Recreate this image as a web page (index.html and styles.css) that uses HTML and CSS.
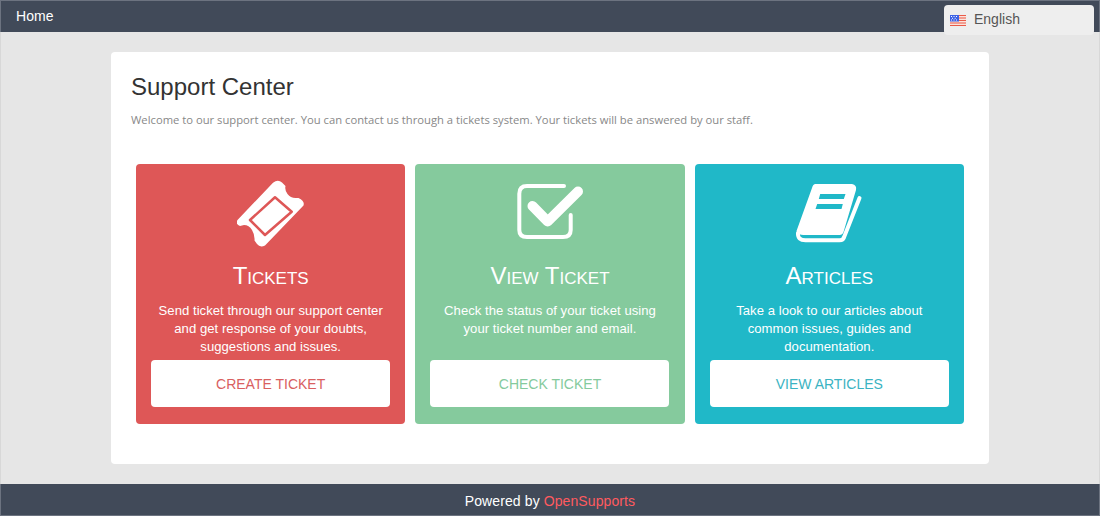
FILE: index.html
```html
<!DOCTYPE html>
<html lang="en">
<head>
    <meta charset="UTF-8">
    <title>Support Center</title>
    <link rel="stylesheet" href="styles.css">
</head>
<body>
    <header class="top-bar">
        <a class="home-link" href="#">Home</a>
        <div class="language-select">
            <svg class="flag" viewBox="0 0 16 11" width="16" height="11">
                <rect width="16" height="11" fill="#fbe3dc"/>
                <path d="M0 .5h16M0 3h16M0 5.500h16M0 8h16M0 10.500h16" stroke="#ea5a48" stroke-width="1.200"/>
                <rect width="9" height="6.500" fill="#3c62e6"/>
                <path d="M1 1.500h1M3.500 1.500h1M6 1.500h1M2 3.300h1M4.700 3.300h1M1 5h1M3.500 5h1M6 5h1" stroke="#fff" stroke-width="1"/>
            </svg>
            <span>English</span>
        </div>
    </header>

    <main class="page">
        <section class="card">
            <h1>Support Center</h1>
            <p class="intro">Welcome to our support center. You can contact us through a tickets system. Your tickets will be answered by our staff.</p>

            <div class="tiles">
                <div class="tile tile-red">
                    <svg class="tile-icon" viewBox="17 10 68 68" width="68" height="68">
                        <path fill="#fff" d="M17.500 50 53 12.700Q58 9 62 12.500L65.500 16Q64.500 20 67.500 24T75.500 28L78.500 28Q85 31 83.500 35.500L45 75.500Q40 78 37 74L34.500 70.500Q35 65 32 60T24 55L20 56Q15 54 17.500 50Z"/>
                        <path fill="#fff" stroke="#de5757" stroke-width="2.500" stroke-linejoin="round" d="M55 27.300 71.700 41.700 45 65 30 50Z"/>
                    </svg>
                    <h2>Tickets</h2>
                    <p>Send ticket through our support center and get response of your doubts, suggestions and issues.</p>
                    <a class="tile-button" href="#">CREATE TICKET</a>
                </div>
                <div class="tile tile-green">
                    <svg class="tile-icon" viewBox="16 10 68 68" width="68" height="68">
                        <path fill="none" stroke="#fff" stroke-width="4" stroke-linecap="round" d="M64 16H27Q19.300 16 19.300 23.700V60Q19.300 67 27 67H63Q70.700 67 70.700 60V45"/>
                        <path fill="none" stroke="#fff" stroke-width="10" stroke-linecap="round" stroke-linejoin="round" d="M32.500 36 47.700 51.500 78 21.500"/>
                    </svg>
                    <h2>View Ticket</h2>
                    <p>Check the status of your ticket using your ticket number and email.</p>
                    <a class="tile-button" href="#">CHECK TICKET</a>
                </div>
                <div class="tile tile-teal">
                    <svg class="tile-icon" viewBox="15.500 10 68 68" width="68" height="68">
                        <path fill="#fff" fill-rule="evenodd" d="M36 14H72.500Q77.500 15 76.500 20L64 62Q63 65 60 65H24Q19 65 17 61L32.500 18Q33.500 14 36 14ZM40.700 24 39.300 29H64.300L66 24ZM37.700 34 36 39H62L63.300 34Z"/>
                        <path fill="none" stroke="#fff" stroke-width="4" stroke-linecap="round" d="M18.500 63Q18 70.300 26 70.300H60Q64 70.300 65 66L80 28"/>
                    </svg>
                    <h2>Articles</h2>
                    <p>Take a look to our articles about common issues, guides and documentation.</p>
                    <a class="tile-button" href="#">VIEW ARTICLES</a>
                </div>
            </div>
        </section>
    </main>

    <footer class="bottom-bar">
        Powered by <a href="#">OpenSupports</a>
    </footer>
</body>
</html>
```

FILE: styles.css
```css
* {
    box-sizing: border-box;
    margin: 0;
    padding: 0;
}

body {
    font-family: "Liberation Sans", Arial, sans-serif;
    background-color: #e6e6e6;
    display: flex;
    flex-direction: column;
    height: 100vh;
    overflow: hidden;
}

a {
    text-decoration: none;
}

/* top bar */
.top-bar {
    position: relative;
    height: 32px;
    flex-shrink: 0;
    background-color: #414a59;
    border: 1px solid #6c7380;
    border-bottom: none;
    padding: 6px 15px;
}

.home-link {
    color: #fff;
    font-size: 14px;
    line-height: 16px;
    letter-spacing: 0.1px;
}

.language-select {
    position: absolute;
    top: 4px;
    right: 5px;
    width: 150px;
    height: 30px;
    background-color: #eee;
    border-radius: 4px;
    color: #555;
    font-size: 14px;
    display: flex;
    align-items: center;
    padding: 0 0 2px 6px;
    gap: 8px;
}

.flag {
    margin-top: 2px;
}

/* main card */
.page {
    flex: 1;
    display: flex;
    justify-content: center;
    padding-top: 20px;
    border-left: 1px solid #d8d8d8;
    border-right: 1px solid #d8d8d8;
}

.card {
    width: 878px;
    height: 412px;
    background-color: #fff;
    border-radius: 4px;
    padding: 20px 25px;
}

.card h1 {
    font-size: 24px;
    font-weight: normal;
    line-height: 30px;
    color: #333;
    margin-left: -5px;
}

.intro {
    font-family: "Open Sans", sans-serif;
    font-size: 11.240px;
    line-height: 16px;
    color: #888;
    margin: 10px 0 36px -5px;
}

.tiles {
    display: flex;
    gap: 10px;
}

.tile {
    flex: 1;
    height: 260px;
    border-radius: 4px;
    color: #fff;
    padding: 16px 15px 17px;
    display: flex;
    flex-direction: column;
    align-items: center;
    text-align: center;
}

.tile-red {
    background-color: #de5757;
}

.tile-green {
    background-color: #85ca9d;
}

.tile-teal {
    background-color: #20b8c8;
}

.tile h2 {
    font-size: 24px;
    font-weight: normal;
    font-variant: small-caps;
    line-height: 28px;
    margin-top: 14px;
}

.tile p {
    font-size: 13.100px;
    letter-spacing: 0.04px;
    line-height: 18px;
    margin-top: 12px;
    width: 239px;
    flex: 1;
}

.tile-button {
    flex-shrink: 0;
    width: 239px;
    height: 47px;
    line-height: 49px;
    background-color: #fff;
    border-radius: 4px;
    font-size: 14px;
}

.tile-red .tile-button {
    color: #d9605f;
}

.tile-green .tile-button {
    color: #85ca9d;
}

.tile-teal .tile-button {
    color: #3bb3c2;
}

/* footer */
.bottom-bar {
    height: 32px;
    flex-shrink: 0;
    background-color: #414a59;
    border: 1px solid #6c7380;
    border-top: none;
    color: #fff;
    font-size: 14px;
    letter-spacing: 0.1px;
    line-height: 34px;
    text-align: center;
}

.bottom-bar a {
    color: #ff5a5f;
}
```
